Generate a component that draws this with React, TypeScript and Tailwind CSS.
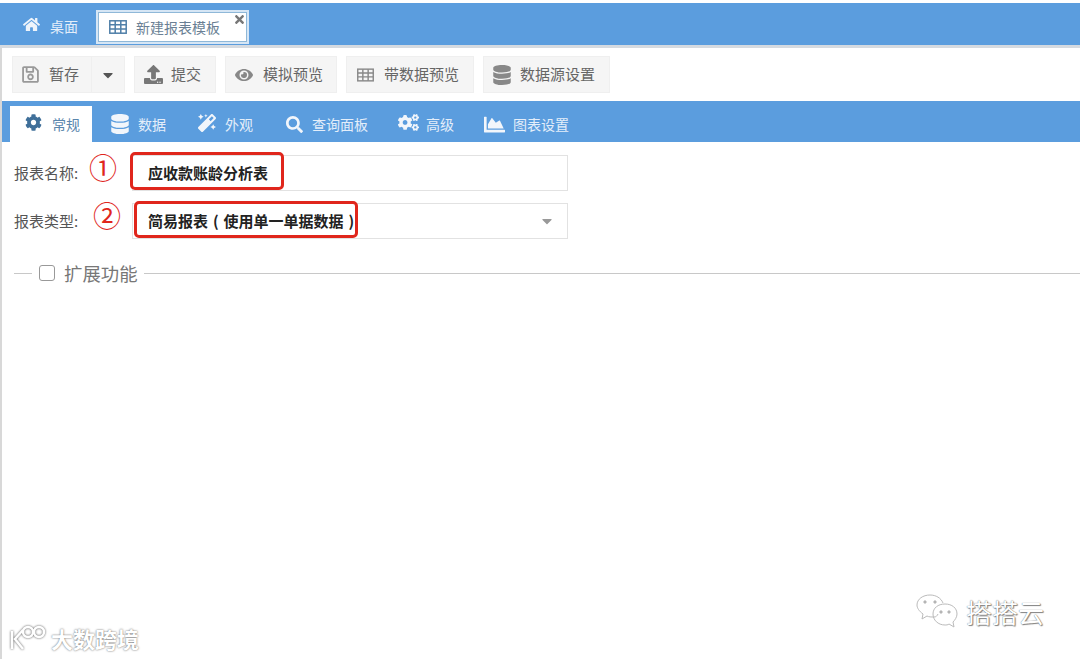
import React from 'react'
import { FaHome, FaTimes, FaRegSave, FaCaretDown, FaUpload, FaEye, FaDatabase, FaCog, FaMagic, FaSearch, FaCogs, FaChartArea } from 'react-icons/fa'

const font = "font-['Noto_Sans_CJK_SC','Liberation_Sans',sans-serif]"

// outlined 3x3 grid, the package's table icon is a heavier one
const TableIcon = ({ className }: { className: string }) => {
  return (
    <svg viewBox="0 0 18 14" fill="none" stroke="currentColor" strokeWidth="1.5" className={className}>
      <rect x="0.8" y="0.8" width="16.4" height="12.4" />
      <path d="M0.8 4.8h16.4M0.8 9h16.4M6.2 0.8v12.4M11.8 0.8v12.4" />
    </svg>
  )
}

const ToolButton = ({ icon, label, className }: { icon: React.ReactNode; label: string; className: string }) => {
  return (
    <div className={`flex h-[37px] items-center border border-[#efefef] bg-[#f5f5f5] text-[15px] text-[#666] ${className}`}>
      {icon}
      <span>{label}</span>
    </div>
  )
}

const SubTab = ({ icon, label, className }: { icon: React.ReactNode; label: string; className: string }) => {
  return (
    <div className={`flex h-[36px] items-center text-[14px] text-[#e4eefa] ${className}`}>
      {icon}
      <span>{label}</span>
    </div>
  )
}

const App = () => {
  return (
    <div className={`relative flex h-[659px] w-[1080px] flex-col overflow-hidden bg-white ${font}`}>
      {/* top tabs */}
      <div className="mt-[3px] flex h-[42px] shrink-0 items-end bg-[#5b9dde] pl-[23px]">
        <div className="mb-[8px] flex w-[73px] items-center text-[14px] text-[#e4eefa]">
          <FaHome className="mr-[10px] mb-[4px] size-[17px] text-[#eef4fb]" />
          <span>桌面</span>
        </div>
        <div className="relative mb-[1px] flex h-[34px] w-[153px] items-center border-2 border-[#d6e6f5] bg-white pl-[11px] text-[14px] text-[#6a7f94] outline outline-[#8fb8d8] -outline-offset-3">
          <TableIcon className="mr-[9px] h-[14px] w-[18px] text-[#4f7fa8]" />
          <span>新建报表模板</span>
          <FaTimes className="absolute top-[1px] right-[1px] size-[13px] text-[#777]" />
        </div>
      </div>
      <div className="h-[3px] shrink-0 bg-[#d5dae0]" />

      <div className="flex min-h-0 flex-1 flex-col border-l-2 border-[#d8d8d8]">
        {/* toolbar */}
        <div className="flex h-[53px] shrink-0 items-start pt-[8px] pl-[10px]">
          <ToolButton className="w-[80px] pl-[8px]" icon={<FaRegSave className="mr-[9px] size-[19px] text-[#999]" />} label="暂存" />
          <div className="flex h-[37px] w-[33px] items-center justify-center border border-l-0 border-[#efefef] bg-[#f5f5f5]">
            <FaCaretDown className="size-[16px] text-[#555]" />
          </div>
          <ToolButton className="ml-[9px] w-[82px] pl-[9px]" icon={<FaUpload className="mr-[8px] size-[19px] text-[#777]" />} label="提交" />
          <ToolButton className="ml-[9px] w-[112px] pl-[9px]" icon={<FaEye className="mr-[10px] size-[18px] text-[#888]" />} label="模拟预览" />
          <ToolButton className="ml-[9px] w-[128px] pl-[10px]" icon={<TableIcon className="mr-[10px] h-[14px] w-[17px] text-[#888]" />} label="带数据预览" />
          <ToolButton className="ml-[9px] w-[127px] pl-[8px]" icon={<FaDatabase className="mr-[8px] size-[20px] text-[#888]" />} label="数据源设置" />
        </div>

        {/* sub tabs */}
        <div className="flex h-[41px] shrink-0 items-end bg-[#5b9dde] pl-[8px]">
          <div className="flex h-[36px] w-[82px] items-center bg-white pl-[15px] text-[14px] text-[#5a86ad]">
            <FaCog className="mr-[10px] mb-[4px] size-[17px] text-[#3f6f99]" />
            <span>常规</span>
          </div>
          <SubTab className="ml-[18px] w-[76px]" icon={<FaDatabase className="mr-[8px] size-[20px] text-[#f2f6fb]" />} label="数据" />
          <SubTab className="ml-[12px] w-[76px]" icon={<FaMagic className="mr-[9px] mb-[3px] size-[18px] text-[#f2f6fb]" />} label="外观" />
          <SubTab className="ml-[12px] w-[102px]" icon={<FaSearch className="mr-[9px] size-[17px] text-[#f2f6fb]" />} label="查询面板" />
          <SubTab className="ml-[10px] w-[75px]" icon={<FaCogs className="mr-[7px] mb-[4px] size-[21px] text-[#f2f6fb]" />} label="高级" />
          <SubTab className="ml-[11px]" icon={<FaChartArea className="mr-[8px] size-[21px] text-[#f2f6fb]" />} label="图表设置" />
        </div>

        {/* form */}
        <div className="flex flex-col pt-[13px] pl-[12px]">
          <div className="flex items-center">
            <label className="w-[118px] text-[15px] text-[#555]">报表名称:</label>
            <div className="flex h-[36px] w-[436px] items-center border border-[#e2e2e2] pl-[15px] text-[15px] font-bold text-[#222]">
              应收款账龄分析表
            </div>
          </div>
          <div className="mt-[12px] flex items-center">
            <label className="w-[118px] text-[15px] text-[#555]">报表类型:</label>
            <div className="flex h-[36px] w-[436px] items-center justify-between border border-[#e2e2e2] pr-[12px] pl-[15px] text-[15px] font-bold text-[#222]">
              <span className="[word-spacing:1.5px]">简易报表 ( 使用单一单据数据 )</span>
              <FaCaretDown className="size-[16px] text-[#999]" />
            </div>
          </div>
          <div className="mt-[21px] flex items-center">
            <div className="h-px w-[18px] bg-[#c8c8c8]" />
            <div className="ml-[7px] size-[16px] rounded-[3px] border border-[#999]" />
            <span className="ml-[9px] text-[18.4px] leading-[26px] text-[#777]">扩展功能</span>
            <div className="ml-[6px] h-px flex-1 bg-[#c8c8c8]" />
          </div>
        </div>
      </div>

      {/* annotations over the screenshot */}
      <div className="absolute top-[152px] left-[130px] h-[38px] w-[154px] rounded-[5px] border-[3px] border-[#e0261c]" />
      <div className="absolute top-[201px] left-[134px] h-[37px] w-[224px] rounded-[5px] border-[3px] border-[#e0261c]" />
      <span className="absolute top-[149px] left-[89px] text-[28px] leading-[36px] text-[#e0261c]">①</span>
      <span className="absolute top-[197px] left-[93px] text-[28px] leading-[36px] text-[#e0261c]">②</span>

      {/* watermarks */}
      <div className="absolute top-[625px] left-[9px] flex items-center">
        <svg width="40" height="26" viewBox="0 0 40 26" fill="none" stroke="#fff" strokeWidth="2.5" className="drop-shadow-[0_0_1px_#555]">
          <path d="M3 6v18M14 5 6 14l8 10" />
          <circle cx="19" cy="7" r="5" />
          <circle cx="30" cy="7" r="5" />
        </svg>
        <span className="ml-[2px] text-[22px] leading-[26px] font-bold text-white [text-shadow:0_0_2px_#555]">大数跨境</span>
      </div>
      <div className="absolute top-[594px] left-[916px] flex items-center">
        <svg width="44" height="36" viewBox="0 0 44 36" fill="none" stroke="#bbb" strokeWidth="1" className="mr-[6px]">
          <path d="M22 20c-1 2-2 3-4 3-3 0-5 0-7-1l-5 3 1-5C3 17 1 14 1 11 1 5 7 1 14 1c6 0 11 3 13 8" />
          <path d="M29 10c7 0 12 4 12 10 0 3-2 6-4 8l1 5-5-3c-1 1-3 1-4 1-7 0-12-5-12-11s5-10 12-10Z" />
          <circle cx="9" cy="8" r="1.2" fill="#aaa" />
          <circle cx="19" cy="8" r="1.2" fill="#aaa" />
          <circle cx="25" cy="18" r="1.2" fill="#aaa" />
          <circle cx="33" cy="18" r="1.2" fill="#aaa" />
        </svg>
        <span className="text-[26px] leading-[34px] text-white [text-shadow:0_0_1px_#555,1px_1px_1px_#888]">搭搭云</span>
      </div>
    </div>
  )
}

export default App
